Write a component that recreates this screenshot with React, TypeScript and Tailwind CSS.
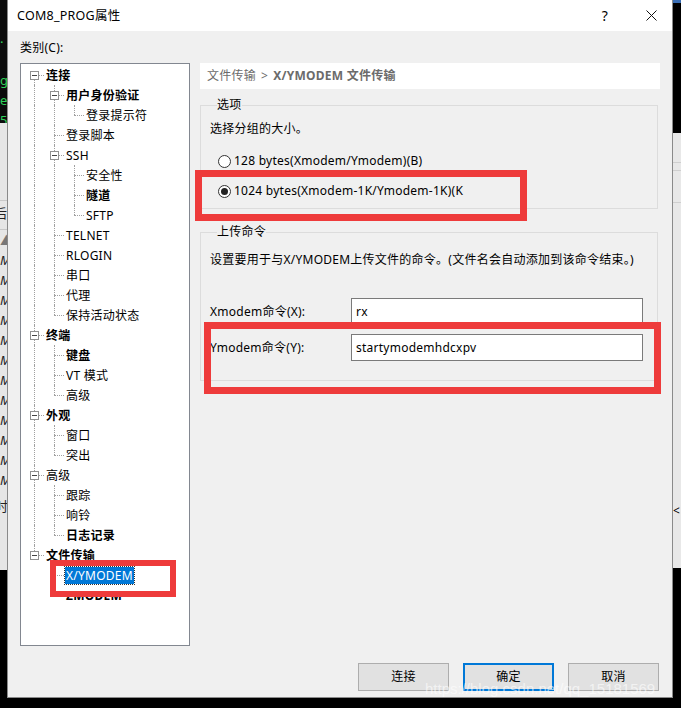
import React from "react";

type TreeNode = { label: string; bold?: boolean; selected?: boolean; children?: TreeNode[] };

const tree: TreeNode[] = [
  {
    label: "连接",
    bold: true,
    children: [
      { label: "用户身份验证", bold: true, children: [{ label: "登录提示符" }] },
      { label: "登录脚本" },
      { label: "SSH", children: [{ label: "安全性" }, { label: "隧道", bold: true }, { label: "SFTP" }] },
      { label: "TELNET" },
      { label: "RLOGIN" },
      { label: "串口" },
      { label: "代理" },
      { label: "保持活动状态" },
    ],
  },
  { label: "终端", bold: true, children: [{ label: "键盘", bold: true }, { label: "VT 模式" }, { label: "高级" }] },
  { label: "外观", bold: true, children: [{ label: "窗口" }, { label: "突出" }] },
  { label: "高级", children: [{ label: "跟踪" }, { label: "响铃" }, { label: "日志记录", bold: true }] },
  {
    label: "文件传输",
    bold: true,
    children: [{ label: "X/YMODEM", selected: true }, { label: "ZMODEM", bold: true }],
  },
];

type Row = { node: TreeNode; rails: boolean[]; hasNext: boolean; firstRoot: boolean };

function flatten(nodes: TreeNode[], rails: boolean[] = [], out: Row[] = []) {
  nodes.forEach((n, i) => {
    const hasNext = i < nodes.length - 1;
    out.push({ node: n, rails, hasNext, firstRoot: rails.length === 0 && i === 0 });
    if (n.children) flatten(n.children, [...rails, hasNext], out);
  });
  return out;
}

const dot = "border-dotted border-[#a0a0a0]";

function TreeRow({ row }: { row: Row }) {
  const { node } = row;
  return (
    <div className="flex h-[20px] items-center">
      {row.rails.map((on, i) => (
        <div key={i} className="relative h-full w-[20px] shrink-0">
          {on && <div className={`absolute left-[10px] top-0 h-full border-l ${dot}`} />}
        </div>
      ))}
      <div className="relative h-full w-[20px] shrink-0">
        {!row.firstRoot && <div className={`absolute left-[10px] top-0 h-[10px] border-l ${dot}`} />}
        {row.hasNext && <div className={`absolute left-[10px] top-[10px] h-[10px] border-l ${dot}`} />}
        <div className={`absolute left-[10px] top-[10px] w-[10px] border-t ${dot}`} />
        {node.children && (
          <div className="absolute left-[6px] top-[6px] flex h-[9px] w-[9px] items-center justify-center border border-[#919191] bg-white">
            <div className="h-px w-[5px] bg-[#444]" />
          </div>
        )}
      </div>
      <span
        className={`ml-[1px] whitespace-nowrap px-[1px] leading-[17px] ${node.bold ? "font-bold" : ""} ${
          node.selected ? "bg-[#0078d7] text-white outline outline-1 outline-dotted outline-[#333]" : ""
        }`}
      >
        {node.label}
      </span>
    </div>
  );
}

function Radio({ checked, label }: { checked?: boolean; label: string }) {
  return (
    <div className="flex h-[18px] items-center">
      <div className="flex h-[13px] w-[13px] items-center justify-center rounded-full border border-[#333] bg-white">
        {checked && <div className="h-[7px] w-[7px] rounded-full bg-[#222]" />}
      </div>
      <span className="ml-[3px] whitespace-nowrap">{label}</span>
    </div>
  );
}

function RedBox({ className }: { className: string }) {
  return <div className={`pointer-events-none absolute border-[#ee3b3b] ${className}`} />;
}

export default function App() {
  const rows = flatten(tree);
  return (
    <div className="relative h-[708px] w-[681px] overflow-hidden bg-black font-['Noto_Sans','Noto_Sans_CJK_SC',sans-serif] text-[12px] tracking-[0.25px] text-black">
      <div className="flex h-[698px]">
        {/* left desktop strip */}
        <div className="flex w-[7px] shrink-0 flex-col overflow-hidden">
          <div className="flex h-[123px] flex-col bg-[#0c0c0c] pt-[32px] text-[13px] leading-[20px] text-[#2fd15a]">
            <span>·</span>
            <span className="mt-[18px]">g</span>
            <span>e</span>
            <span>5</span>
          </div>
          <div className="flex h-[447px] flex-col bg-[#e6e6e6] text-[13px] leading-[20px] text-[#222]">
            <div className="h-[78px] border-b border-[#c8c8c8]" />
            <span className="-ml-[6px] mt-[2px]">后</span>
            <div className="mt-[6px] border-t border-[#c8c8c8]" />
            <span className="text-[#777]">▲</span>
            {["M", "M", "M", "M", "M", "M", "M", "M", "M", "M", "M", "M"].map((m, i) => (
              <span key={i} className="italic">
                {m}
              </span>
            ))}
            <span className="-ml-[5px] mt-[6px]">时</span>
          </div>
          <div className="flex-1 bg-black" />
        </div>

        {/* dialog */}
        <div className="flex w-[666px] shrink-0 flex-col border-x border-b border-[#8a8a8a] bg-[#f0f0f0]">
          <div className="flex h-[31px] items-center bg-white pl-[9px]">
            <span className="text-[12.5px] leading-[18px]">COM8_PROG属性</span>
            <span className="ml-auto mr-[38px] text-[14px]">?</span>
            <svg width="11" height="11" viewBox="0 0 11 11" className="mr-[15px]">
              <path d="M0.5 0.5 L10.5 10.5 M10.5 0.5 L0.5 10.5" stroke="#111" strokeWidth="1" />
            </svg>
          </div>

          <div className="flex flex-1 flex-col px-[12px] pt-[8px]">
            <div className="leading-[18px]">类别(C):</div>
            <div className="mt-[6px] flex gap-[10px]">
              <div className="h-[583px] w-[170px] shrink-0 overflow-hidden border border-[#828790] bg-white pl-[3px] pt-[1px]">
                {rows.map((r, i) => (
                  <TreeRow key={i} row={r} />
                ))}
              </div>

              <div className="flex w-[461px] flex-col">
                <div className="flex h-[26px] items-center bg-white px-[7px] text-[#6b6b6b]">
                  <span>文件传输</span>
                  <span className="mx-[5px]">&gt;</span>
                  <span className="font-bold">X/YMODEM 文件传输</span>
                </div>

                <fieldset className="mr-[2px] mt-[8px] border border-[#dcdcdc] pb-[8px] pl-[9px]">
                  <legend className="ml-[7px] leading-[16px]">选项</legend>
                  <div className="mt-[7px] leading-[18px]">选择分组的大小。</div>
                  <div className="ml-[8px] mt-[14px] flex flex-col gap-[12px]">
                    <Radio label="128 bytes(Xmodem/Ymodem)(B)" />
                    <Radio checked label="1024 bytes(Xmodem-1K/Ymodem-1K)(K" />
                  </div>
                </fieldset>

                <fieldset className="mr-[2px] mt-[15px] border border-[#dcdcdc] pb-[19px] pl-[9px]">
                  <legend className="ml-[7px] leading-[16px]">上传命令</legend>
                  <div className="mt-[11px] whitespace-nowrap leading-[18px]">
                    设置要用于与X/YMODEM上传文件的命令。(文件名会自动添加到该命令结束。)
                  </div>
                  <div className="mt-[29px] flex items-center">
                    <span className="w-[141px] whitespace-nowrap">Xmodem命令(X):</span>
                    <div className="flex h-[27px] w-[292px] items-center border border-[#7a7a7a] bg-white px-[4px]">rx</div>
                  </div>
                  <div className="mt-[9px] flex items-center">
                    <span className="w-[141px] whitespace-nowrap">Ymodem命令(Y):</span>
                    <div className="flex h-[27px] w-[292px] items-center border border-[#7a7a7a] bg-white px-[4px]">
                      startymodemhdcxpv
                    </div>
                  </div>
                </fieldset>
              </div>
            </div>

            <div className="mt-[17px] flex justify-end gap-[14px] pr-[1px]">
              <button className="h-[28px] w-[91px] border border-[#adadad] bg-[#e1e1e1]">连接</button>
              <button className="h-[28px] w-[91px] border-2 border-[#0078d7] bg-[#e1e1e1]">确定</button>
              <button className="h-[28px] w-[91px] border border-[#adadad] bg-[#e1e1e1]">取消</button>
            </div>
          </div>
        </div>

        {/* right desktop strip */}
        <div className="flex w-[8px] shrink-0 flex-col">
          <div className="h-[3px] bg-[#3b6fb6]" />
          <div className="h-[130px] bg-black" />
          <div className="flex h-[435px] flex-col bg-[#e8e8e8]">
            <div className="h-[30px] border-b border-[#cfcfcf]" />
            <div className="h-[8px] border-b border-[#cfcfcf]" />
            <div className="h-[32px] border-b border-[#cfcfcf]" />
            <span className="mt-[300px] text-[12px] leading-[16px]">&lt;</span>
          </div>
          <div className="flex-1 bg-black" />
        </div>
      </div>

      {/* annotations in the screenshot */}
      <RedBox className="left-[50px] top-[560px] h-[37px] w-[126px] border-[6px]" />
      <RedBox className="left-[195px] top-[170px] h-[51px] w-[332px] border-[7px]" />
      <RedBox className="left-[204px] top-[322px] h-[72px] w-[457px] border-[7px]" />

      <div className="pointer-events-none absolute left-[425px] top-[680px] whitespace-nowrap font-['Liberation_Sans',sans-serif] text-[15px] leading-[18px] tracking-normal text-white/60">
        https://blog.csdn.net/qq_15181569
      </div>
    </div>
  );
}
